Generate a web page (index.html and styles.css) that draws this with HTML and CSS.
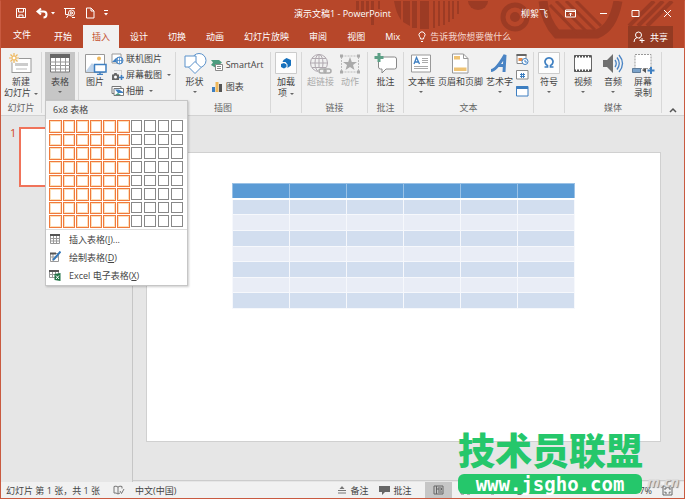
FILE: index.html
```
<!DOCTYPE html>
<html lang="zh-CN">
<head>
<meta charset="utf-8">
<title>演示文稿1 - PowerPoint</title>
<link rel="stylesheet" href="styles.css">
</head>
<body>
<div class="window">
  <header class="top">
    <svg class="decor" width="330" height="48" viewBox="355 0 330 48" aria-hidden="true">
      <g fill="#9c3b24">
        <path d="M357 0h3v9h-3zM362 0h3v17h-3zM367 0h3v10h-3zM372 0h3v24h-3zM379 0h2v8h-2z"/>
        <path d="M395 0h7v19q-5-7-7-19zM404 0h7v25l-7-4zM413 0h5v27h-5zM421 0h9v28h-9zM434 0h2v27h-2zM439 0h2v25h-2zM444 0h2v24h-2zM449 0h2v21h-2zM453 0h2v18h-2zM458 0h2v13h-2z"/>
        <path d="M469 0h20a10 9 0 0 1-20 0z"/>
        <circle cx="516" cy="16" r="5"/>
      </g>
      <g fill="none" stroke="#9c3b24">
        <circle cx="516" cy="16" r="12" stroke-width="5"/>
        <path d="M544 0q2 20 14 33h40q16-6 21-33" stroke-width="9"/>
        <path d="M551 4l28 29M557 0l32 32M567 0l29 29M577 0l25 25" stroke-width="3"/>
        <path d="M630 25l25-25M639 25l25-25M648 25l25-25" stroke-width="4"/>
      </g>
    </svg>
    <div class="titlebar">
      <div class="quick">
        <button aria-label="保存"><svg width="12" height="12" viewBox="0 0 12 12"><path d="M1.500 1.500h9v9h-9zM3.500 1.500v3.500h5V1.500M4 10.500V8h4v2.500" class="w"/></svg></button>
        <button aria-label="撤消"><svg width="20" height="12" viewBox="0 0 20 12"><path d="M3 4.500h5.500a3 3 0 0 1 0 6M6 1.500l-3.500 3L6 7.500" class="w wide"/><path d="M16 5h4l-2 2.500z" fill="#fff"/></svg></button>
        <button aria-label="从头开始"><svg width="14" height="12" viewBox="0 0 14 12"><path d="M1 1.500h11M2.500 2v5.500h3M3.500 11l2-3" class="w"/><circle cx="8.500" cy="6" r="3" class="w"/><path d="M7.700 4.500v3l2.300-1.500zM9 10.500h3" class="w"/></svg></button>
        <button aria-label="新建"><svg width="10" height="12" viewBox="0 0 10 12"><path d="M1.500 1h4.500l3 3v7h-7.500zM6 1v3h3" class="w"/></svg></button>
        <button aria-label="自定义"><svg width="6" height="8" viewBox="0 0 6 8"><path d="M1 1.500h4" class="w"/><path d="M1 4h4l-2 2.500z" fill="#fff"/></svg></button>
      </div>
      <h1>演示文稿1 - PowerPoint</h1>
      <div class="account">
        <span class="user">柳絮飞</span>
        <button aria-label="功能区选项"><svg width="11" height="9" viewBox="0 0 11 9"><path d="M.5 1h10v7H.5zM.5 2.500h10M5.500 7V4M4 5.500L5.500 4 7 5.500" class="w"/></svg></button>
        <button aria-label="最小化"><svg width="9" height="9" viewBox="0 0 9 9"><path d="M1 4.500h7" class="w"/></svg></button>
        <button aria-label="最大化"><svg width="9" height="9" viewBox="0 0 9 9"><path d="M1 1.500h7v6H1z" class="w"/></svg></button>
        <button aria-label="关闭"><svg width="9" height="9" viewBox="0 0 9 9"><path d="M1 1l7 7M8 1L1 8" class="w"/></svg></button>
      </div>
    </div>
    <nav class="tabs">
      <a href="#">文件</a><a href="#">开始</a><a href="#" class="on" aria-current="page">插入</a><a href="#">设计</a><a href="#">切换</a><a href="#">动画</a><a href="#">幻灯片放映</a><a href="#">审阅</a><a href="#">视图</a><a href="#">Mix</a>
      <button class="tell"><svg width="8" height="12" viewBox="0 0 8 12"><path d="M2.500 8q0-1.500-1-2.500a3 3 0 1 1 5 0q-1 1-1 2.500zM3 10.500h2" class="w"/></svg>告诉我你想要做什么</button>
      <button class="share"><svg width="12" height="12" viewBox="0 0 12 12"><circle cx="5.500" cy="4" r="3" class="w"/><path d="M1 11q0-3.500 3-4.500M6.500 7.500l1 1M9 7v5M6.500 9.500h5" class="w"/></svg>共享</button>
    </nav>
  </header>

  <section class="ribbon" aria-label="插入">
    <div class="group">
      <div class="tools">
        <button class="big"><svg width="24" height="23" viewBox="0 0 24 23"><rect x="3" y="6.500" width="19" height="14" fill="#fff" stroke="#999"/><path d="M6 11h13v3H6z" fill="#ccc"/><path d="M7 17h11" stroke="#bbb"/><circle cx="5" cy="6" r="5" fill="#f1f1f1"/><path d="M5 1v10M0 6h10M1.500 2.500l7 7M8.500 2.500l-7 7" stroke="#efb85c" stroke-width="1.200"/><circle cx="5" cy="6" r="2" fill="#fff" stroke="#efb85c"/></svg><span>新建</span><span>幻灯片<i class="arrow"></i></span></button>
      </div>
      <h2>幻灯片</h2>
    </div>
    <div class="group">
      <div class="tools">
        <button class="big pressed" aria-expanded="true"><svg width="24" height="23" viewBox="0 0 24 23"><path d="M2.500 3h19v17h-19z" fill="#fff" stroke="#777"/><path d="M2 2h20v4H2z" fill="#666"/><path d="M2 10h20M2 13.500h20M2 17h20M7.500 6v14M12.500 6v14M17.500 6v14" stroke="#999"/></svg><span>表格</span><i class="arrow"></i></button>
      </div>
      <div class="menu">
        <h3>6x8 表格</h3>
        <div class="picker" id="picker"></div>
        <button><svg width="12" height="12" viewBox="0 0 12 12"><path d="M1.500 1.500h9v9h-9zM1.500 5.500h9M1.500 8h9M4.500 3v8M7.500 3v8" fill="#fff" stroke="#999"/><path d="M1 1h10v2H1z" fill="#555"/></svg><span>插入表格(<u>I</u>)...</span></button>
        <button><svg width="12" height="12" viewBox="0 0 12 12"><path d="M1.500 2.500h8v8h-8zM4 3v8M1 6h8" fill="#fff" stroke="#999"/><path d="M1 1.500h6v2H1z" fill="#555"/><path d="M11.500.5L6 7l-2 2" stroke="#3478ba" stroke-width="2"/></svg><span>绘制表格(<u>D</u>)</span></button>
        <button><svg width="12" height="12" viewBox="0 0 12 12"><path d="M.5 1.500h9v7h-9zM3.500 3v6M6.500 3v6M1 5.500h8" fill="#fff" stroke="#999"/><path d="M0 1h10v2H0z" fill="#555"/><path d="M5.500 5l6-1v8l-6-1z" fill="#217346"/><path d="M7 6.500l3 3.500M10 6.500L7 10" stroke="#fff"/></svg><span>Excel 电子表格(<u>X</u>)</span></button>
      </div>
    </div>
    <div class="group">
      <div class="tools">
        <button class="big"><svg width="24" height="23" viewBox="0 0 24 23"><path d="M2.500 2.500h19v18h-19z" fill="#fff" stroke="#999"/><path d="M3 19l6-8 5 6v3H3z" fill="#c0d4ea"/><circle cx="16" cy="6.500" r="2" fill="#efb85c"/><path d="M11.500 12.500h11.500v7.500H11.500z" fill="#fff" stroke="#3e7fc1" stroke-width="1.500"/><path d="M14 22.500h6M17 20v2" stroke="#3e7fc1" stroke-width="1.500"/></svg><span>图片</span></button>
        <div class="stack">
          <button><svg width="13" height="12" viewBox="0 0 13 12"><path d="M1 1h9v9H1z" fill="#fff" stroke="#999"/><path d="M1 9l4-4 2 4z" fill="#3e7fc1"/><circle cx="8.500" cy="7.500" r="3.500" fill="#fff" stroke="#3e7fc1"/><path d="M5 7.500h7M8.500 4v7M6.500 5v5M10.500 5v5" stroke="#3e7fc1" stroke-width=".7"/></svg>联机图片</button>
          <button><svg width="13" height="12" viewBox="0 0 13 12"><path d="M3.500 1.500h7v5" fill="none" stroke="#aaa" stroke-dasharray="1 1"/><path d="M1 5.500h1.500l1-1.500h2l1 1.500H8V11H1z" fill="#666"/><circle cx="4.500" cy="8" r="1.500" fill="#fff"/><path d="M10.500 6v5M8 8.500h5" stroke="#3e7fc1" stroke-width="1.500"/></svg>屏幕截图<i class="arrow"></i></button>
          <button><svg width="13" height="12" viewBox="0 0 13 12"><path d="M1 1.500h9v7H1z" fill="#fff" stroke="#777"/><path d="M3 3.500h9.500v7H3z" fill="#fff" stroke="#777"/><path d="M4 4.500h4l4 2.500v1H7z" fill="#3e7fc1"/><path d="M4 10l3-2 3 2z" fill="#4d9b7f"/></svg>相册<i class="arrow"></i></button>
        </div>
      </div>
    </div>
    <div class="group">
      <div class="tools">
        <button class="big"><svg width="24" height="23" viewBox="0 0 24 23"><circle cx="16" cy="8.500" r="7" fill="#fff" stroke="#5b92cb"/><path d="M2 4h11v11H2z" fill="#fff" stroke="#5b92cb"/><path d="M12 9.500l6 6-6 6-6-6z" fill="#fff" stroke="#5b92cb"/></svg><span>形状</span><i class="arrow"></i></button>
        <div class="stack two">
          <button><svg width="13" height="12" viewBox="0 0 13 12"><path d="M0 1h8l3 2.500L8 6H5v3L0 6l2-2.500z" fill="#4d9b7f"/><path d="M4.500 5.500h7v6h-7zM6 7.500h4M6 9.500h4" fill="#fff" stroke="#888"/></svg>SmartArt</button>
          <button><svg width="13" height="12" viewBox="0 0 13 12"><path d="M1 6h3v5H1z" fill="#3e7fc1"/><path d="M4.500 1h3v10h-3z" fill="#efb85c"/><path d="M8 3h3v8H8z" fill="#555"/></svg>图表</button>
        </div>
      </div>
      <h2>插图</h2>
    </div>
    <div class="group">
      <div class="tools">
        <button class="big"><svg width="22" height="23" viewBox="0 0 22 23"><path d="M.5 .5h21v21H.5z" fill="#fdfdfd" stroke="#ccc"/><path d="M6 12l3-1 2.500 1.500V15L9 16.500 6 15zM8.500 8l3-2 4.500 2v5.500L12.500 16v-3.500l-2-2.500H7.500z" fill="#1671bd"/></svg><span>加载</span><span>项<i class="arrow"></i></span></button>
      </div>
    </div>
    <div class="group">
      <div class="tools">
        <button class="big off" disabled><svg width="24" height="23" viewBox="0 0 24 23"><g fill="none" stroke="#b0a9b0"><circle cx="11" cy="11" r="8.500"/><ellipse cx="11" cy="11" rx="4" ry="8.500"/><path d="M2.500 11h17M11 2v17M4 6.500h14M4 15.500h14"/></g><path d="M10 16h14v7H10z" fill="#f1f1f1"/><rect x="11" y="17" width="7" height="4" rx="2" class="chain"/><rect x="16" y="17" width="7" height="4" rx="2" class="chain"/></svg><span>超链接</span></button>
        <button class="big off" disabled><svg width="24" height="23" viewBox="0 0 24 23"><path d="M3.500 4h17v16h-17z" fill="none" stroke="#bbb" stroke-dasharray="2 1"/><path d="M2 2.500h3v3H2zM19 2.500h3v3h-3zM2 18.500h3v3H2zM19 18.500h3v3h-3zM12 5l1.800 5H19l-4 3 1.500 5-4.500-3-4.500 3L9 13l-4-3h5.200z" fill="#aaa"/></svg><span>动作</span></button>
      </div>
      <h2>链接</h2>
    </div>
    <div class="group">
      <div class="tools">
        <button class="big"><svg width="24" height="23" viewBox="0 0 24 23"><path d="M4.500 5h16q2 0 2 2v8q0 2-2 2H12l-4 4V17H6.500q-2 0-2-2z" fill="#fff" stroke="#888"/><path d="M5 1v9M.5 5.500h9" stroke="#5ca086" stroke-width="3"/></svg><span>批注</span></button>
      </div>
      <h2>批注</h2>
    </div>
    <div class="group">
      <div class="tools text-tools">
        <button class="big"><svg width="24" height="23" viewBox="0 0 24 23"><path d="M2.500 3h19v17h-19z" fill="#fff" stroke="#999"/><path d="M13 6.500h6M13 8.500h6M13 10.500h6M5 14.500h14M5 16.500h14" stroke="#aaa"/><path d="M5 12l2.500-6.500L10.500 12M6 10h4" fill="none" stroke="#3e7fc1" stroke-width="1.300"/></svg><span>文本框</span><i class="arrow"></i></button>
        <button class="big"><svg width="24" height="23" viewBox="0 0 24 23"><path d="M4.500 2h11l4.500 4.500V21H4.500z" fill="#fff" stroke="#999"/><path d="M15.500 2v4.500H20" fill="none" stroke="#999"/><path d="M6 4h6v3.500H6zM6 15.500h12.500V19H6z" fill="#efc373"/></svg><span>页眉和页脚</span></button>
        <button class="big"><svg width="24" height="23" viewBox="0 0 24 23"><path d="M3 18.500q5 0 14-15.500l-1 17M9 13.500h8" fill="none" stroke="#4a84c4" stroke-width="3"/></svg><span>艺术字</span><i class="arrow"></i></button>
        <div class="stack">
          <button aria-label="日期和时间"><svg width="13" height="12" viewBox="0 0 13 12"><path d="M1 1.500h9v9H1z" fill="#fff" stroke="#888"/><path d="M.5 1h10v2H.5z" fill="#666"/><path d="M2.500 5h4v3h-4z" fill="#e88c4a"/><circle cx="9" cy="8.500" r="3" fill="#fff" stroke="#3e7fc1"/><path d="M9 7v2h2" fill="none" stroke="#3e7fc1"/></svg></button>
          <button aria-label="幻灯片编号"><svg width="13" height="12" viewBox="0 0 13 12"><path d="M.5 1.500h11.500v8.500H.5z" fill="#fff" stroke="#888"/><path d="M4 5.500h5M4 7.500h5M5.500 4v5M7.500 4v5" stroke="#3e7fc1"/></svg></button>
          <button aria-label="对象"><svg width="13" height="12" viewBox="0 0 13 12"><path d="M.5 1.500h11.500v9.500H.5z" fill="#fff" stroke="#3e7fc1"/><path d="M.5 1h11.500v3H.5z" fill="#3e7fc1"/></svg></button>
        </div>
      </div>
      <h2>文本</h2>
    </div>
    <div class="group">
      <div class="tools">
        <button class="big"><svg width="22" height="23" viewBox="0 0 22 23"><path d="M.5 .5h21v21H.5z" fill="#fdfdfd" stroke="#ccc"/><path d="M6.500 15h3v-1.500a4 4 0 1 1 3 0V15h3" fill="none" stroke="#3e7fc1" stroke-width="1.700"/></svg><span>符号</span><i class="arrow"></i></button>
      </div>
    </div>
    <div class="group">
      <div class="tools media">
        <button class="big"><svg width="24" height="23" viewBox="0 0 24 23"><path d="M3.500 3.500h17v16h-17z" fill="#fff" stroke="#666"/><path d="M3 4.500h18M3 18.500h18" stroke="#555" stroke-width="2" stroke-dasharray="2 1"/></svg><span>视频</span><i class="arrow"></i></button>
        <button class="big"><svg width="24" height="23" viewBox="0 0 24 23"><path d="M2 8h4l6-6v19l-6-6H2z" fill="#707070"/><path d="M14 8q2.500 3.500 0 7M16 5.500q4.500 6 0 12M18 3q7 8.500 0 17" fill="none" stroke="#4a84c4" stroke-width="1.300"/></svg><span>音频</span><i class="arrow"></i></button>
        <button class="big"><svg width="24" height="23" viewBox="0 0 24 23"><path d="M4 2.500h16v14H4z" fill="#fff" stroke="#999" stroke-dasharray="2 1"/><path d="M1.500 16.500h8v4h-8z" fill="#7ba2c9" stroke="#607d9a"/><path d="M11 18l4-2v5z" fill="#555"/><path d="M20 15v7M16.500 18.500h7" stroke="#3e7fc1" stroke-width="2"/></svg><span>屏幕</span><span>录制</span></button>
      </div>
      <h2>媒体</h2>
    </div>
    <button class="collapse" aria-label="折叠功能区"><svg width="8" height="6" viewBox="0 0 8 6"><path d="M1 5l3-3 3 3" fill="none" stroke="#555" stroke-width="1.500"/></svg></button>
  </section>

  <main class="work">
    <aside class="thumbs"><span>1</span><div class="thumb"></div></aside>
    <div class="canvas">
      <div class="slide">
        <table aria-label="6x8 表格"><tbody id="cells"></tbody></table>
      </div>
    </div>
  </main>

  <footer class="status">
    <span>幻灯片 第 1 张，共 1 张</span>
    <svg class="book" width="12" height="10" viewBox="0 0 12 10"><path d="M5 9V2Q3 .5 1 1.500V8q2-.5 4 1zM5 2q2-1.500 4-.5v2M5 9l2-1M7 6l1.500 2.500L11 4" fill="none" stroke="#777"/></svg>
    <span>中文(中国)</span>
    <div class="right">
      <button class="notes"><svg width="10" height="10" viewBox="0 0 10 10"><path d="M5 1l2.500 3h-5z" fill="#777"/><path d="M1 5.500h8M1 8h8" stroke="#777"/></svg>备注</button>
      <button class="comments"><svg width="11" height="10" viewBox="0 0 11 10"><path d="M0 1h11v6H6L3 10V7H0z" fill="#666"/></svg>批注</button>
      <button class="view on" aria-label="普通视图"><svg width="11" height="10" viewBox="0 0 11 10"><path d="M1 1h9v8H1zM3.500 1v8M5 3h3.500v2H5zM5 7h4" fill="none" stroke="#666"/></svg></button>
      <button class="view" aria-label="幻灯片浏览"><svg width="11" height="10" viewBox="0 0 11 10"><path d="M1 1h3v3H1zM7 1h3v3H7zM1 6h3v3H1zM7 6h3v3H7z" fill="none" stroke="#777"/></svg></button>
      <button class="view" aria-label="阅读视图"><svg width="11" height="10" viewBox="0 0 11 10"><path d="M1 1h4.500v7H1zM5.500 1H10v7H5.500zM4 9h3" fill="none" stroke="#777"/></svg></button>
      <button class="view" aria-label="幻灯片放映"><svg width="11" height="10" viewBox="0 0 11 10"><path d="M0 1h11M1.500 1v5h8V1M5.500 6v3M3.500 9.500h4" fill="none" stroke="#777"/></svg></button>
      <span class="zoom">7%</span>
      <button class="fit" aria-label="适应窗口"><svg width="11" height="11" viewBox="0 0 11 11"><path d="M1 1h9v9H1zM3 5V3h2M6.500 3H8v2M3 6.500V8h2M8 6.500V8H6.500" fill="none" stroke="#666"/></svg></button>
    </div>
  </footer>

  <div class="sitemark">m.cn</div>
  <div class="stamp"><strong>技术员联盟</strong><span>www.jsgho.com</span></div>
</div>
<script src="app.js"></script>
</body>
</html>
```
FILE: styles.css
```
* { box-sizing: border-box; }
body { margin: 0; font: 9px/11px "Open Sans", "Noto Sans CJK SC", sans-serif; color: #444; }
button { margin: 0; padding: 0; border: 0; background: none; font: inherit; color: inherit; white-space: nowrap; }
svg { display: block; flex: none; }
h1, h2, h3 { margin: 0; font: inherit; }
.w { fill: none; stroke: #fff; }
.wide { stroke-width: 2; }

.window { position: relative; display: flex; flex-direction: column; min-height: 100vh; border: 1px solid #c95a40; border-top-color: #b7472a; background: #e6e6e6; overflow: hidden; }

.top { position: relative; background: #b7472a; color: #fff; }
.decor { position: absolute; top: 0; right: 0; }
.titlebar { position: relative; display: grid; grid-template-columns: 1fr auto 1fr; align-items: center; height: 24px; }
.quick { display: flex; align-items: center; gap: 8px; padding-left: 14px; }
.account { display: flex; justify-content: flex-end; align-items: center; gap: 23px; padding-right: 12px; }
.account .user { margin-right: -6px; }
.tabs { position: relative; display: flex; align-items: stretch; height: 23px; line-height: 23px; }
.tabs a { padding: 0 10px; color: #fff; text-decoration: none; }
.tabs a:first-child { padding: 0 12px; line-height: 20px; margin-right: 1px; }
.tabs .on { margin: 0 1px; padding: 0 9px; background: #f1f1f1; color: #c4502f; }
.tell { display: flex; align-items: center; gap: 4px; margin-left: 8px; color: #f6d9d0; }
.share { display: flex; align-items: center; gap: 5px; margin: 1px 11px 0 auto; padding: 0 5px; background: #933a22; color: #fff; }

.ribbon { display: grid; grid-template-columns: 41fr 37fr 97fr 95fr 31fr 66fr 36fr 130fr 31fr 97fr 22fr; height: 68px; padding: 4px 0 2px; background: #f1f1f1; border-bottom: 1px solid #d2d2d2; }
.group { position: relative; display: flex; flex-direction: column; justify-content: space-between; min-width: 0; border-right: 1px solid #d8d8d8; }
.group h2 { text-align: center; color: #666; line-height: 11px; }
.tools { display: flex; justify-content: center; height: 48px; gap: 4px; }
.text-tools { gap: 3px; }
.media { gap: 6px; }
.big { display: flex; flex-direction: column; align-items: center; min-width: 24px; }
.big svg { margin-bottom: 1px; }
.big span { height: 11px; }
.big > .arrow { margin: 4px 0 0; }
.arrow { display: inline-block; margin-left: 3px; border: 2px solid transparent; border-top: 2px solid #666; border-bottom: 0; vertical-align: middle; }
.pressed { background: #c6c6c6; min-width: 30px; }
.off { color: #aaa; }
.chain { fill: none; stroke: #aaa; stroke-width: 1.500; }
.stack { display: flex; flex-direction: column; gap: 5px; margin-top: 1px; }
.stack button { display: flex; align-items: center; gap: 2px; height: 11px; }
.two { gap: 11px; padding-top: 6px; }
.collapse { justify-self: center; align-self: end; }

.menu { position: absolute; z-index: 5; top: 48px; left: 3px; width: 143px; padding-bottom: 1px; background: #fff; border: 1px solid #c6c6c6; box-shadow: 1px 1px 2px rgba(0, 0, 0, .2); }
.menu h3 { padding: 0 7px; background: #eee; line-height: 18px; }
.picker { display: grid; grid-template: repeat(8, 1fr) / repeat(10, 1fr); gap: 1px; height: 111px; padding: 1px 3px; border-bottom: 1px solid #ddd; }
.picker i { margin: 0 1px 1px 0; border: 1px solid #888; background: #fff; }
.picker .hit { margin: 0; border-color: #f07a3c; outline: 1px solid #fce0bc; outline-offset: -2px; }
.menu button { display: flex; align-items: center; gap: 8px; width: 100%; height: 18px; padding-left: 3px; }

.work { display: flex; flex: 1; }
.thumbs { display: flex; gap: 3px; width: 132px; padding: 11px 8px 0 9px; border-right: 1px solid #c6c6c6; color: #d24726; font-size: 11px; }
.thumb { flex: 1; height: 60px; border: 2px solid #f0735a; background: #fff; }
.canvas { flex: 1; margin-bottom: 1px; padding: 36px 23px 0 13px; border-bottom: 1px solid #ccc; }
.slide { aspect-ratio: 16 / 9; padding: 30px 16.600% 0; background: #fff; border: 1px solid #d0d0d0; }
.slide table { width: 100%; height: 126px; border-collapse: collapse; table-layout: fixed; }
.slide tr { height: 15px; }
.slide td, .slide th { padding: 0; border: 1px solid #f6f8fc; background: #e9edf6; }
.slide th { background: #5b9bd5; border-color: #9bc2e6; border-bottom: 2px solid #fff; }
.slide tr:nth-child(even) td { background: #d2deef; }

.status { display: flex; align-items: center; height: 16px; padding-left: 5px; background: #f1f1f1; }
.book { margin: 0 10px 0 13px; }
.right { display: flex; align-items: center; align-self: stretch; margin-left: auto; }
.right button { display: flex; align-items: center; align-self: stretch; gap: 3px; }
.notes { margin-right: 11px; }
.comments { margin-right: 14px; }
.view { padding: 0 8px; }
.view.on { background: #c6c6c6; }
.zoom { margin-left: 106px; }
.fit { margin: 0 11px 0 10px; }

.sitemark { position: absolute; right: 5px; bottom: 10px; font: italic bold 14px/12px "Open Sans", sans-serif; color: #ddd; text-shadow: 1px 1px 1px #888; }
.stamp { position: absolute; right: 42px; bottom: 4px; width: 184px; text-align: center; color: #25c76b; }
.stamp strong { display: block; margin-bottom: 4px; font: 900 37px/42px "Noto Sans CJK SC", sans-serif; white-space: nowrap; }
.stamp span { display: block; border-radius: 6px; background: #25c76b; color: #fff; font: bold 19px/20px "DejaVu Sans Mono", monospace; }
```
FILE: app.js
```
const picker = document.getElementById('picker');
const cells = document.getElementById('cells');
for (let row = 0; row < 8; row++) {
  for (let col = 0; col < 10; col++) {
    const box = document.createElement('i');
    if (col < 6) box.className = 'hit';
    picker.append(box);
  }
  const tr = document.createElement('tr');
  for (let col = 0; col < 6; col++) tr.append(document.createElement(row ? 'td' : 'th'));
  cells.append(tr);
}
```
